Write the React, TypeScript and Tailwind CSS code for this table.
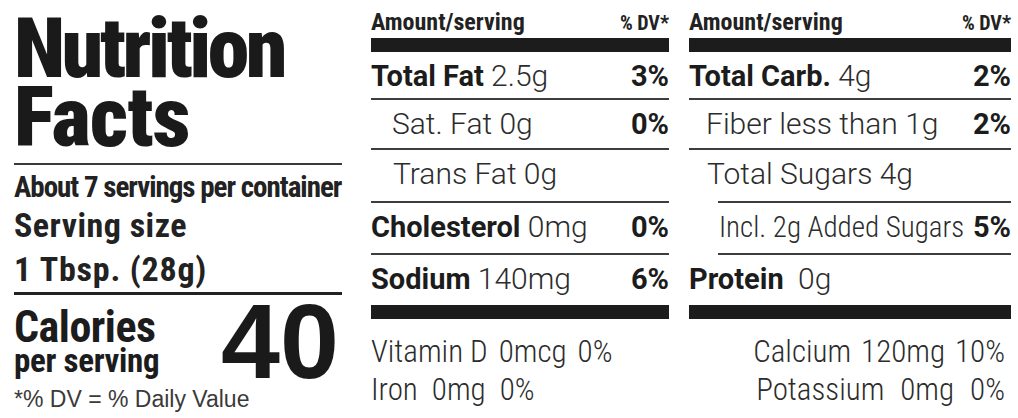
const cond = "font-['Roboto_Condensed','Liberation_Sans',sans-serif]";
const rob = "font-['Roboto','Liberation_Sans',sans-serif]";
const helv = "font-['Liberation_Sans',Arial,sans-serif]";

const boldCls = `${rob} [font-stretch:90%] font-bold text-[29px] text-[#1c1c1c]`;
const lightCls = `${rob} font-light text-[30px] text-[#2c2c2c]`;

function Row({
  label,
  value,
  dv,
  indent = "",
  line = "border-b-2",
  h,
  gap = " ",
}: {
  label?: string;
  value: string;
  dv?: string;
  indent?: string;
  line?: string;
  h: string;
  gap?: string;
}) {
  return (
    <div className={`${h} ${line} border-[#3d3d3d] flex items-start justify-between pt-[10px] leading-[28px] ${indent}`}>
      <span className="whitespace-pre">
        {label && <b className={boldCls}>{label + gap}</b>}
        <span className={lightCls}>{value}</span>
      </span>
      {dv && <b className={boldCls}>{dv}</b>}
    </div>
  );
}

function Header() {
  return (
    <>
      <div className={`h-[38px] pt-[11px] flex items-baseline justify-between leading-[22px] font-bold text-[#222] ${cond}`}>
        <span className="text-[24px]">Amount/serving</span>
        <span className="text-[20px]">% DV*</span>
      </div>
      <div className="h-[14px] bg-[#1c1c1c]" />
    </>
  );
}

export default function App() {
  return (
    <div className={`w-[1018px] h-[418px] bg-white flex text-[#222] ${cond}`}>
      {/* left: title, servings, calories */}
      <div className="w-[328px] ml-[14px] flex flex-col">
        <h1 className="pt-[14px] text-[84px] leading-[69px] font-black text-[#1a1a1a]">
          <span className="tracking-[-3.5px]">Nutrition</span>
          <br />
          <span className="tracking-[-1px]">Facts</span>
        </h1>
        <div className="mt-[11px] h-[2px] bg-[#3a3a3a]" />
        <div className="leading-[30px] font-bold text-[#222]">
          <p className="mt-[7px] text-[29px] tracking-[-1px] whitespace-nowrap">About 7 servings per container</p>
          <p className="mt-[8px] text-[34px] tracking-[0.5px]">Serving size</p>
          <p className="mt-[14px] text-[34px] tracking-[0.8px] whitespace-pre">1 Tbsp. (28g)</p>
        </div>
        <div className="mt-[8px] h-[3px] bg-[#222]" />
        <div className="flex items-start justify-between">
          <div className="flex flex-col font-bold text-[#1c1c1c]">
            <span className="mt-[12px] text-[44px] leading-[40px] tracking-[-0.5px]">Calories</span>
            <span className="mt-[3px] text-[33px] leading-[22px] tracking-[-0.3px]">per serving</span>
          </div>
          <span className={`mt-[6px] mr-[3px] text-[106px] leading-[80px] font-bold text-[#1a1a1a] ${helv}`}>
            40
          </span>
        </div>
        <p className={`mt-[7px] text-[23px] leading-[23px] text-[#3a3a3a] whitespace-nowrap ${helv}`}>
          *% DV = % Daily Value
        </p>
      </div>

      {/* middle: fats, cholesterol, sodium */}
      <div className="w-[298px] ml-[29px] flex flex-col">
        <Header />
        <Row label="Total Fat" value="2.5g" dv="3%" h="h-[48px]" />
        <Row value="Sat. Fat 0g" dv="0%" indent="pl-[21px]" h="h-[50px]" />
        <Row value="Trans Fat 0g" indent="pl-[22px]" h="h-[53px]" />
        <Row label="Cholesterol" value="0mg" dv="0%" h="h-[52px]" />
        <Row label="Sodium" value="140mg" dv="6%" line="" h="h-[50px]" />
        <div className="h-[14px] bg-[#1c1c1c]" />
        <div className="mt-[14px] text-[31px] leading-[38px] font-light text-[#2c2c2c]">
          <p className="flex gap-[11px]">
            <span>Vitamin D</span>
            <span>0mcg</span>
            <span>0%</span>
          </p>
          <p className="flex gap-[14px]">
            <span>Iron</span>
            <span>0mg</span>
            <span>0%</span>
          </p>
        </div>
      </div>

      {/* right: carbs, sugars, protein */}
      <div className="w-[322px] ml-[20px] flex flex-col">
        <Header />
        <Row label="Total Carb." value="4g" dv="2%" h="h-[48px]" />
        <Row value="Fiber less than 1g" dv="2%" indent="pl-[17px]" h="h-[50px]" />
        <div className="h-[53px] flex flex-col">
          <div className="flex-1 pt-[10px] pl-[18px] leading-[28px]">
            <span className={lightCls}>Total Sugars 4g</span>
          </div>
          <div className="ml-[29px] h-[2px] bg-[#3d3d3d]" />
        </div>
        <div className="h-[52px] flex flex-col">
          <div className="flex-1 flex items-start justify-between pt-[10px] pl-[30px] leading-[28px]">
            <span className={`${cond} font-light text-[29px] text-[#2c2c2c] whitespace-nowrap`}>Incl. 2g Added Sugars</span>
            <b className={boldCls}>5%</b>
          </div>
          <div className="ml-[29px] h-[2px] bg-[#3d3d3d]" />
        </div>
        <Row label="Protein" value="0g" gap="  " line="" h="h-[50px]" />
        <div className="h-[14px] bg-[#1c1c1c]" />
        <div className="mt-[14px] pr-[6px] text-[31px] leading-[38px] font-light text-[#2c2c2c] flex flex-col items-end">
          <p className="flex gap-[10px]">
            <span>Calcium</span>
            <span>120mg</span>
            <span>10%</span>
          </p>
          <p className="flex gap-[16px]">
            <span>Potassium</span>
            <span>0mg</span>
            <span>0%</span>
          </p>
        </div>
      </div>
    </div>
  );
}
